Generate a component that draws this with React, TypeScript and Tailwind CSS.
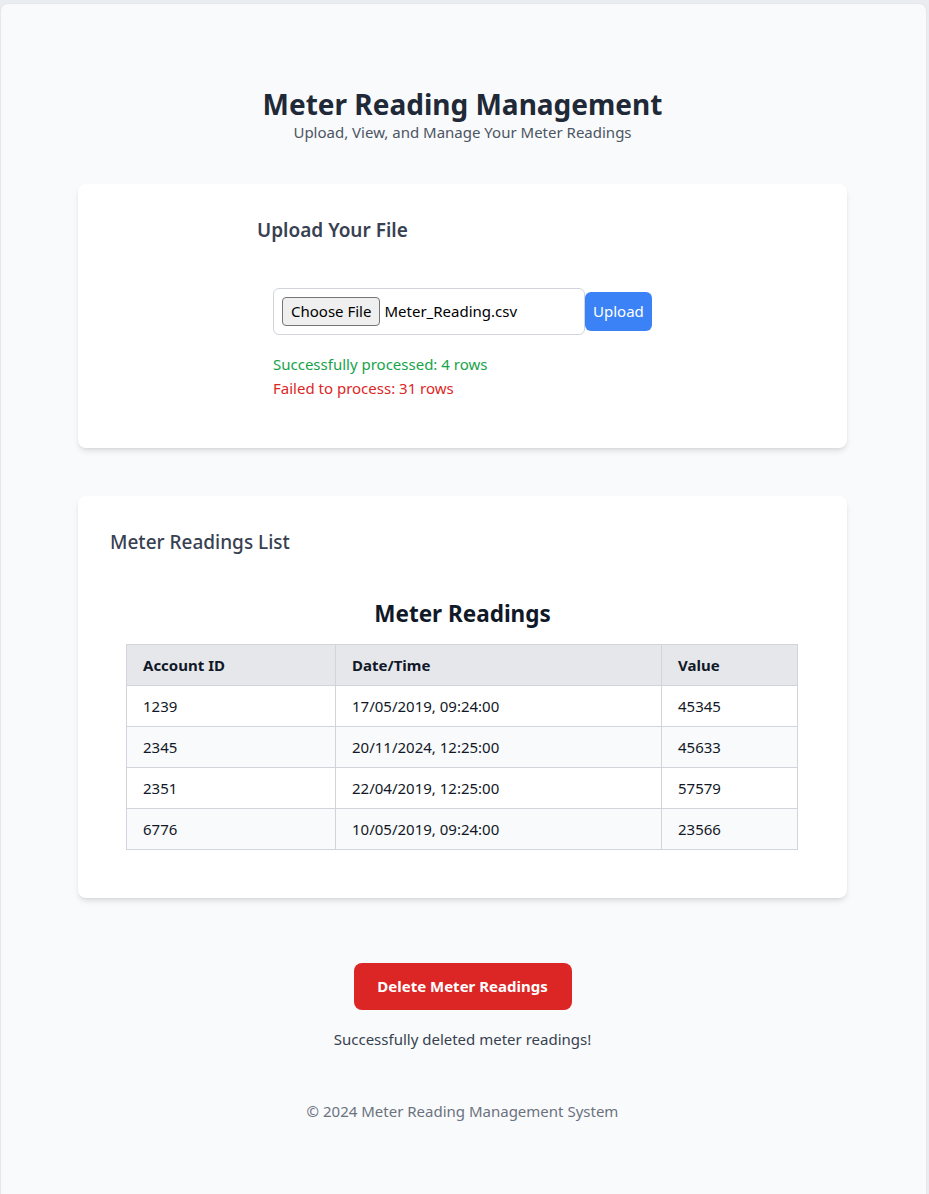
const rows = [
  { id: "1239", date: "17/05/2019, 09:24:00", value: "45345" },
  { id: "2345", date: "20/11/2024, 12:25:00", value: "45633" },
  { id: "2351", date: "22/04/2019, 12:25:00", value: "57579" },
  { id: "6776", date: "10/05/2019, 09:24:00", value: "23566" },
];

const App = () => {
  return (
    <div
      className="h-[1194px] overflow-hidden bg-[#e9ecf0] pt-[3px]"
      style={{ fontFamily: '"Noto Sans", "Open Sans", sans-serif' }}
    >
      <div className="mr-[2px] min-h-[1200px] rounded-t-lg border border-[#e5e7eb] bg-[#f9fafb] pt-[84px] pr-[2px] pb-16">
        <header className="text-center">
          <h1 className="text-[28px] leading-[32px] font-bold text-[#1f2937]">
            Meter Reading Management
          </h1>
          <p className="text-[15px] leading-6 text-[#4b5563]">
            Upload, View, and Manage Your Meter Readings
          </p>
        </header>

        <section className="mx-auto mt-10 w-[769px] rounded-lg bg-white pt-8 pb-12 shadow-md">
          <div className="mx-auto w-[411px]">
            <h2 className="text-[19px] leading-7 font-semibold text-[#374151]">
              Upload Your File
            </h2>
            <div className="mt-11 ml-4 flex items-center">
              <div className="flex h-[47px] w-[312px] items-center rounded-md border border-[#d1d5db] px-2">
                <span className="rounded-sm border border-[#767676] bg-[#efefef] px-2 py-[3px] text-[15px] leading-[21px] text-black">
                  Choose File
                </span>
                <span className="ml-1 text-[15px] text-black">Meter_Reading.csv</span>
              </div>
              <button className="h-[39px] rounded-md bg-[#3b82f6] px-2 text-[15px] text-white">
                Upload
              </button>
            </div>
            <div className="mt-[17px] ml-4 text-[15px] leading-6">
              <p className="text-[#16a34a]">Successfully processed: 4 rows</p>
              <p className="text-[#dc2626]">Failed to process: 31 rows</p>
            </div>
          </div>
        </section>

        <section className="mx-auto mt-12 w-[769px] rounded-lg bg-white px-8 pt-8 pb-12 shadow-md">
          <h2 className="text-[19px] leading-7 font-medium text-[#374151]">
            Meter Readings List
          </h2>
          <h3 className="mt-[42px] text-center text-[22.5px] leading-8 font-bold text-[#111827]">
            Meter Readings
          </h3>
          <table className="mx-4 mt-[14px] w-[672px] border-collapse text-[15px] text-[#111827]">
            <thead>
              <tr className="h-[41px] bg-[#e5e7eb]">
                <th className="w-[209px] border border-[#d1d5db] px-4 text-left font-bold">Account ID</th>
                <th className="w-[326px] border border-[#d1d5db] px-4 text-left font-bold">Date/Time</th>
                <th className="border border-[#d1d5db] px-4 text-left font-bold">Value</th>
              </tr>
            </thead>
            <tbody>
              {rows.map((r, i) => (
                <tr key={r.id} className={i % 2 === 1 ? "h-[41px] bg-[#f9fafb]" : "h-[41px] bg-white"}>
                  <td className="border border-[#d1d5db] px-4">{r.id}</td>
                  <td className="border border-[#d1d5db] px-4">{r.date}</td>
                  <td className="border border-[#d1d5db] px-4">{r.value}</td>
                </tr>
              ))}
            </tbody>
          </table>
        </section>

        <div className="mt-[65px] flex flex-col items-center">
          <button className="h-[47px] w-[218px] rounded-lg bg-[#dc2626] text-[15px] font-bold text-white">
            Delete Meter Readings
          </button>
          <p className="mt-[17px] text-[15px] leading-6 text-[#374151]">
            Successfully deleted meter readings!
          </p>
        </div>

        <footer className="mt-12 text-center text-[15px] leading-6 text-[#6b7280]">
          © 2024 Meter Reading Management System
        </footer>
      </div>
    </div>
  );
};

export default App;
